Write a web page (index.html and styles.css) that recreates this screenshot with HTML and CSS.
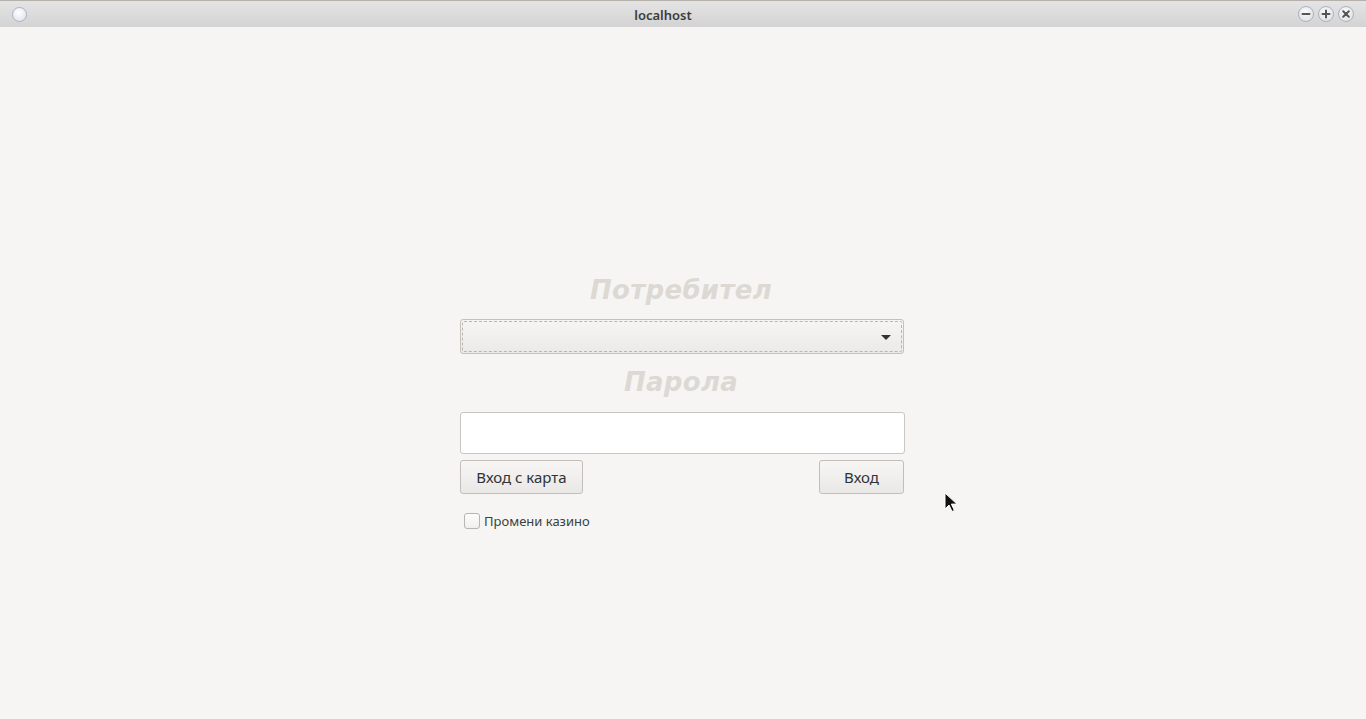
FILE: index.html
```html
<!DOCTYPE html>
<html lang="bg">
<head>
<meta charset="utf-8">
<title>localhost</title>
<link rel="stylesheet" href="styles.css">
</head>
<body>
<div class="window">
  <header class="titlebar">
    <span class="menu-orb"></span>
    <span class="title">localhost</span>
    <div class="controls">
      <span class="ctl"><svg width="16" height="16" viewBox="0 0 16 16"><path d="M4.5 8h7" stroke="#555" stroke-width="2" stroke-linecap="round"/></svg></span>
      <span class="ctl"><svg width="16" height="16" viewBox="0 0 16 16"><path d="M4.5 8h7M8 4.5v7" stroke="#555" stroke-width="2" stroke-linecap="round"/></svg></span>
      <span class="ctl"><svg width="16" height="16" viewBox="0 0 16 16"><path d="M5.2 5.2l5.6 5.6M10.8 5.2l-5.6 5.6" stroke="#555" stroke-width="2" stroke-linecap="round"/></svg></span>
    </div>
  </header>
  <main class="content">
    <form class="login">
      <div class="label">Потребител</div>
      <div class="combo"><div class="combo-inner"><span class="arrow"></span></div></div>
      <div class="label label-pass">Парола</div>
      <input class="pass" type="password">
      <div class="buttons">
        <button type="button" class="btn">Вход с карта</button>
        <button type="button" class="btn btn-login">Вход</button>
      </div>
      <label class="check"><span class="box"></span><span>Промени казино</span></label>
    </form>
    <svg class="cursor" width="14" height="22" viewBox="0 0 14 22"><path d="M1 1v16l4-4 3 6.5 2.4-1.1-3-6.3h5.6z" fill="#111" stroke="#fff" stroke-width="1"/></svg>
  </main>
</div>
</body>
</html>
```
FILE: styles.css
```css
html, body {
  margin: 0;
  padding: 0;
  height: 100%;
}
body {
  background: #f6f5f3;
  font-family: "Noto Sans", "Open Sans", sans-serif;
  overflow: hidden;
}
.window {
  display: flex;
  flex-direction: column;
  height: 100%;
}
.titlebar {
  height: 26px;
  border-top: 1px solid #b5b0aa;
  background: linear-gradient(#e4e4e4, #d3d3d3);
  display: flex;
  align-items: center;
  position: relative;
  flex: none;
}
.menu-orb {
  width: 15px;
  height: 15px;
  margin-left: 12px;
  border-radius: 50%;
  border: 1px solid #a7b3c8;
  background: radial-gradient(circle at 45% 35%, #ffffff, #e6e8ee 70%, #d5d9e2);
  box-sizing: border-box;
}
.title {
  position: absolute;
  left: 0;
  right: 40px;
  text-align: center;
  font-family: "Noto Sans", sans-serif;
  font-weight: 600;
  font-size: 13px;
  color: #3c3c3c;
  top: 5px;
  pointer-events: none;
}
.controls {
  margin-left: auto;
  margin-right: 12px;
  display: flex;
  gap: 4px;
}
.ctl {
  width: 16px;
  height: 16px;
  border-radius: 50%;
  box-sizing: border-box;
  border: 1px solid #aab2c2;
  background: radial-gradient(circle at 45% 35%, #fbfbfb, #e2e3e7 75%, #cfd2d9);
  display: flex;
  align-items: center;
  justify-content: center;
}
.ctl svg {
  margin: -1px;
}
.content {
  flex: 1;
  position: relative;
  display: flex;
  justify-content: center;
}
.login {
  width: 445px;
  margin-right: 1px;
  padding-top: 248px;
  display: flex;
  flex-direction: column;
}
.label {
  font-family: "DejaVu Sans", sans-serif;
  font-weight: bold;
  font-style: italic;
  font-size: 26px;
  letter-spacing: 0.3px;
  line-height: 30px;
  color: #dcd9d5;
  text-align: center;
  margin-left: -3px;
}
.combo {
  margin-top: 14px;
  height: 35px;
  box-sizing: border-box;
  border: 1px solid #c4c0bb;
  border-radius: 3px;
  background: linear-gradient(#f6f5f4, #ebeae8);
  padding: 1px;
  width: 444px;
}
.combo-inner {
  height: 100%;
  box-sizing: border-box;
  border: 1px dashed #b9b6b2;
  border-radius: 2px;
  display: flex;
  align-items: center;
  justify-content: flex-end;
  padding-right: 10px;
}
.arrow {
  width: 0;
  height: 0;
  border-left: 5px solid transparent;
  border-right: 5px solid transparent;
  border-top: 5px solid #2e3436;
  margin-top: 1px;
}
.label-pass {
  margin-top: 13px;
}
.pass {
  margin: 15px 0 0;
  height: 42px;
  width: 445px;
  box-sizing: border-box;
  border: 1px solid #c9c5c0;
  border-radius: 3px;
  background: #fff;
  outline: none;
  padding: 0 8px;
}
.buttons {
  margin-top: 6px;
  display: flex;
  justify-content: space-between;
  width: 444px;
}
.btn {
  height: 34px;
  box-sizing: border-box;
  border: 1px solid #c2beb9;
  border-radius: 3px;
  background: linear-gradient(#f7f6f5, #eae8e6);
  font-family: "Noto Sans", sans-serif;
  font-size: 15px;
  color: #2e3436;
  padding: 0;
  width: 123px;
}
.btn-login {
  width: 85px;
}
.check {
  margin-top: 19px;
  margin-left: 4px;
  display: flex;
  align-items: center;
  gap: 4px;
  font-size: 13px;
  color: #3b3f41;
  height: 16px;
}
.box {
  width: 16px;
  height: 16px;
  box-sizing: border-box;
  border: 1px solid #b8b4af;
  border-radius: 3px;
  background: linear-gradient(#fdfdfd, #f0efee);
}
.cursor {
  position: absolute;
  left: 944px;
  top: 465px;
}
```
